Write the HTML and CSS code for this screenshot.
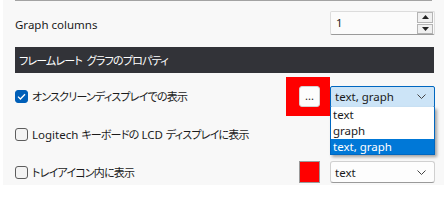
FILE: index.html
```html
<!DOCTYPE html>
<html lang="ja">
<head>
  <meta charset="UTF-8">
  <title>Graph settings</title>
  <link rel="stylesheet" href="styles.css">
</head>
<body>

  <div class="panel">
    <div class="topline"></div>

    <div class="row row-columns">
      <span class="label">Graph columns</span>
      <div class="spin">
        <span class="spin-value">1</span>
        <div class="spin-buttons">
          <div class="spin-btn">
            <svg width="7" height="4" viewBox="0 0 7 4"><path d="M0 4 L3.5 0 L7 4 Z" fill="#222"/></svg>
          </div>
          <div class="spin-btn">
            <svg width="7" height="4" viewBox="0 0 7 4"><path d="M0 0 L7 0 L3.5 4 Z" fill="#222"/></svg>
          </div>
        </div>
      </div>
    </div>

    <div class="header"><span class="ja">フレームレート グラフのプロパティ</span></div>

    <div class="row row-osd">
      <label class="check">
        <span class="box checked">
          <svg width="9" height="7" viewBox="0 0 9 7"><path d="M1 3.6 L3.4 6 L8 1.2" fill="none" stroke="#fff" stroke-width="1.3"/></svg>
        </span>
        <span class="ja">オンスクリーンディスプレイでの表示</span>
      </label>
      <div class="controls">
        <div class="highlight">
          <div class="dots">...</div>
        </div>
        <div class="select open">
          <span>text, graph</span>
          <svg class="chev" width="9" height="5" viewBox="0 0 9 5"><path d="M0.5 0.5 L4.5 4.5 L8.5 0.5" fill="none" stroke="#444" stroke-width="1"/></svg>
        </div>
      </div>
    </div>

    <div class="row row-lcd">
      <label class="check">
        <span class="box"></span>
        <span>Logitech <span class="ja">キーボードの</span> LCD <span class="ja">ディスプレイに表示</span></span>
      </label>
    </div>

    <div class="row row-tray">
      <label class="check">
        <span class="box"></span>
        <span class="ja">トレイアイコン内に表示</span>
      </label>
      <div class="controls">
        <div class="swatch"></div>
        <div class="select">
          <span>text</span>
          <svg class="chev" width="9" height="5" viewBox="0 0 9 5"><path d="M0.5 0.5 L4.5 4.5 L8.5 0.5" fill="none" stroke="#444" stroke-width="1"/></svg>
        </div>
      </div>
    </div>

    <div class="dropdown">
      <div class="option">text</div>
      <div class="option">graph</div>
      <div class="option selected">text, graph</div>
    </div>
  </div>

</body>
</html>
```

FILE: styles.css
```css
body {
  margin: 0;
  background: #ffffff;
  font-family: "Segoe UI", "Noto Sans", "Noto Sans CJK JP", sans-serif;
  font-size: 11.5px;
  color: #1b1b1b;
}
.ja {
  font-family: "Noto Sans CJK JP", sans-serif;
  font-size: 11px;
  letter-spacing: -0.8px;
  word-spacing: 3px;
  font-feature-settings: "palt";
}
.panel {
  position: relative;
  margin-left: 3px;
  width: 420px;
  height: 185px;
  padding: 0 9px 0 12px;
  background: #f8f8f8;
}
.topline {
  width: 417px;
  border-top: 1px solid #a3a3a3;
}
.row {
  display: flex;
  align-items: center;
  justify-content: space-between;
}
.row-columns {
  margin-top: 10px;
  height: 24px;
}
.label {
  padding-top: 3px;
}
.spin {
  display: flex;
  justify-content: space-between;
  width: 103px;
  height: 22px;
  background: #fbfbfb;
  border: 1px solid #dcdcdc;
  border-bottom-color: #9a9a9a;
  border-radius: 2px;
}
.spin-value {
  padding-left: 5px;
  line-height: 22px;
}
.spin-buttons {
  display: flex;
  flex-direction: column;
  gap: 1px;
  margin-right: 1px;
}
.spin-btn {
  display: flex;
  align-items: center;
  justify-content: center;
  width: 14px;
  height: 9px;
  background: #f0f0f0;
  border: 1px solid #b4b4b4;
}
.header {
  margin-top: 12px;
  width: 415px;
  height: 26px;
  line-height: 26px;
  padding-left: 4px;
  background: #323338;
  color: #ffffff;
}
.row-osd {
  margin-top: 4px;
  height: 39px;
}
.row-lcd {
  height: 36px;
}
.row-tray {
  margin-top: 9px;
  height: 22px;
}
.check {
  display: flex;
  align-items: center;
  gap: 4px;
  line-height: 13px;
}
.box {
  display: flex;
  align-items: center;
  justify-content: center;
  box-sizing: border-box;
  width: 13px;
  height: 13px;
  border: 1px solid #5d5d5d;
  border-radius: 3px;
  background: #f3f3f3;
}
.box.checked {
  background: #005fb8;
  border-color: #005fb8;
}
.controls {
  display: flex;
  align-items: center;
}
.highlight {
  padding: 9px 10px 9px 13px;
  background: #ff0000;
}
.dots {
  box-sizing: border-box;
  width: 21px;
  height: 21px;
  line-height: 17px;
  text-align: center;
  font-size: 11px;
  background: #fdfdfd;
  border: 1px solid #d3d3d3;
  border-radius: 3px;
}
.swatch {
  box-sizing: border-box;
  width: 21px;
  height: 22px;
  margin-right: 10px;
  background: #ff0000;
  border: 1px solid #9a9a9a;
}
.select {
  display: flex;
  align-items: center;
  justify-content: space-between;
  box-sizing: border-box;
  width: 105px;
  height: 22px;
  padding: 0 8px 0 4px;
  background: #fdfdfd;
  border: 1px solid #d0d0d0;
  border-bottom-color: #9a9a9a;
  border-radius: 3px;
}
.select.open {
  background: #cce4f7;
  border-color: #0067c0;
  border-radius: 2px;
}
.dropdown {
  position: absolute;
  left: 327px;
  top: 107px;
  width: 103px;
  background: #ffffff;
  border: 1px solid #0067c0;
  border-top: none;
  box-shadow: 2px 2px 3px rgba(0, 0, 0, 0.35);
}
.option {
  height: 16px;
  line-height: 16px;
  padding-left: 2px;
}
.option.selected {
  height: 15px;
  line-height: 15px;
  background: #0078d7;
  color: #ffffff;
}
```
